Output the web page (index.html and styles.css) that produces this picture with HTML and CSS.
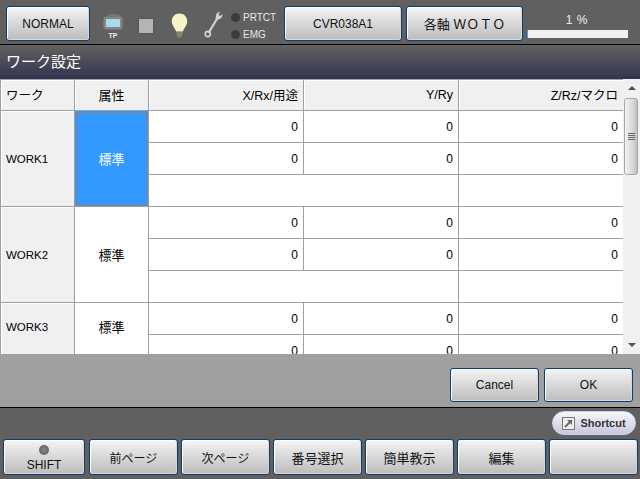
FILE: index.html
```html
<!DOCTYPE html>
<html lang="ja">
<head>
<meta charset="utf-8">
<title>ワーク設定</title>
<link rel="stylesheet" href="styles.css">
</head>
<body>
<div class="screen">
  <header class="topbar">
    <button class="btn mode">NORMAL</button>
    <div class="tp">
      <svg width="20" height="16" viewBox="0 0 20 16"><path d="M6 3V1h8v2" fill="none" stroke="#7c7c7c" stroke-width="1.400"/><rect x="0.500" y="2.500" width="19" height="13" rx="3" fill="#858585"/><rect x="3" y="5" width="14" height="8" rx="1" fill="#a5dcee"/><circle cx="16.500" cy="2" r="1.200" fill="#d85050"/></svg>
      <span>TP</span>
    </div>
    <div class="stop"></div>
    <svg class="bulb" width="17" height="25" viewBox="0 0 17 25"><path d="M8.500 0.500C3.800 0.500 0.800 4 0.800 8.500c0 4.200 3.400 6.500 4.200 10h7c.8-3.500 4.200-5.800 4.200-10C16.200 4 13.200 0.500 8.500 0.500z" fill="#f6f3c4"/><path d="M5.500 19h6v2.500L10 24.500H7L5.500 21.500z" fill="#8d8560"/></svg>
    <svg class="wrench" width="19" height="27" viewBox="0 0 19 27"><path d="M13.500 7 4.500 22" stroke="#d2d2d2" stroke-width="2.200" fill="none"/><path d="M11.500 7.500 12.500 2.500 16 0.500 14.500 3.500 16 5l2.500-1.800c.3 2.800-1.500 4.800-5 5.600z" fill="#d2d2d2"/><circle cx="3.800" cy="23" r="2.600" fill="none" stroke="#d2d2d2" stroke-width="1.600"/></svg>
    <div class="lamps">
      <div class="lamp"><i></i><span>PRTCT</span></div>
      <div class="lamp"><i></i><span>EMG</span></div>
    </div>
    <button class="btn wide">CVR038A1</button>
    <button class="btn wide spaced">各軸 ＷＯＴＯ</button>
    <div class="progress">
      <span>1 %</span>
      <div class="track"><div class="fill" style="width:1%"></div></div>
    </div>
  </header>

  <h1 class="title">ワーク設定</h1>

  <section class="grid-wrap">
    <div class="viewport">
      <table class="grid">
        <colgroup><col class="c1"><col class="c2"><col class="c3"><col class="c3"><col class="c4"></colgroup>
        <thead>
          <tr><th class="left">ワーク</th><th class="center">属性</th><th>X/Rx/用途</th><th>Y/Ry</th><th>Z/Rz/マクロ</th></tr>
        </thead>
        <tbody>
          <tr><th class="left" rowspan="3">WORK1</th><td class="center sel" rowspan="3">標準</td><td>0</td><td>0</td><td>0</td></tr>
          <tr><td>0</td><td>0</td><td>0</td></tr>
          <tr><td colspan="2"></td><td></td></tr>
          <tr><th class="left" rowspan="3">WORK2</th><td class="center" rowspan="3">標準</td><td>0</td><td>0</td><td>0</td></tr>
          <tr><td>0</td><td>0</td><td>0</td></tr>
          <tr><td colspan="2"></td><td></td></tr>
          <tr><th class="left clipped" rowspan="2">WORK3</th><td class="center clipped" rowspan="2">標準</td><td>0</td><td>0</td><td>0</td></tr>
          <tr><td>0</td><td>0</td><td>0</td></tr>
        </tbody>
      </table>
    </div>
    <div class="scrollbar">
      <div class="arrow up"></div>
      <div class="thumb"><i></i><i></i><i></i><i></i></div>
      <div class="rest"></div>
      <div class="arrow down"></div>
    </div>
  </section>

  <section class="actions">
    <button class="btn act">Cancel</button>
    <button class="btn act">OK</button>
  </section>

  <footer class="bottom">
    <div class="shortcut-row">
      <button class="shortcut">
        <svg width="13" height="13" viewBox="0 0 13 13"><rect x=".5" y=".5" width="12" height="12" fill="#eee" stroke="#777"/><path d="M3 10 9 4" fill="none" stroke="#666" stroke-width="1.800"/><path d="M5 3h5v5z" fill="#666"/></svg>
        Shortcut
      </button>
    </div>
    <nav class="fkeys">
      <button class="btn key first"><i class="led"></i><span>SHIFT</span></button>
      <button class="btn key">前ページ</button>
      <button class="btn key">次ページ</button>
      <button class="btn key cjk">番号選択</button>
      <button class="btn key cjk">簡単教示</button>
      <button class="btn key cjk">編集</button>
      <button class="btn key"></button>
    </nav>
  </footer>
</div>
</body>
</html>
```

FILE: styles.css
```css
* { box-sizing: border-box; }
html, body { margin: 0; padding: 0; }
body { width: 640px; height: 479px; overflow: hidden; background: #606060; }
body, button, table {
  font-family: "Liberation Sans", "Noto Sans CJK JP", sans-serif;
  font-size: 12px;
  color: #000;
}
.screen { width: 640px; height: 479px; display: flex; flex-direction: column; }

.btn {
  margin: 0;
  padding: 0;
  border: 1px solid #0b3f74;
  border-radius: 3px;
  background: linear-gradient(#f6f6f6, #e6e6e6 25%, #bcbcbc);
  box-shadow: inset 1px 1px 0 #fff, inset -1px -1px 0 #d8d8d8;
  color: #111;
}

.topbar {
  height: 45px;
  flex: none;
  display: flex;
  align-items: flex-start;
  padding: 6px 0 0 6px;
  background: #606060;
  border-bottom: 1px solid #000;
}
.mode { width: 84px; height: 35px; }
.tp {
  width: 20px;
  margin: 8px 0 0 13px;
  display: flex;
  flex-direction: column;
  align-items: center;
  color: #eee;
  font-size: 7px;
  font-weight: bold;
  line-height: 8px;
}
.tp svg { display: block; margin-bottom: 2px; }
.stop {
  width: 14px;
  height: 14px;
  margin: 13px 0 0 16px;
  background: #b4b4b4;
  box-shadow: 0 0 2px #444;
}
.bulb { margin: 7px 0 0 18px; flex: none; }
.wrench { margin: 5px 0 0 16px; flex: none; }
.lamps { width: 53px; margin-left: 8px; padding-top: 4px; display: flex; flex-direction: column; gap: 3px; }
.lamp { height: 14px; display: flex; align-items: center; gap: 3px; color: #e8e8e8; font-size: 10px; }
.lamp i { width: 9px; height: 9px; border-radius: 50%; background: #3c3c3c; flex: none; }
.wide { width: 118px; height: 35px; margin-right: 4px; }
.wide.spaced { width: 117px; margin-right: 0; font-size: 13px; }
.progress { width: 102px; margin-left: 4px; padding-top: 6px; display: flex; flex-direction: column; align-items: center; }
.progress span { color: #f0f0f0; font-size: 12px; line-height: 16px; word-spacing: 1px; padding-right: 3px; }
.track { width: 101px; height: 8px; margin: 2px auto 0 0; background: #f0f0f0; }
.fill { height: 8px; min-width: 1px; background: #3399ff; }

.title {
  height: 34px;
  flex: none;
  margin: 0;
  padding: 0 0 4px 6px;
  display: flex;
  align-items: center;
  font-size: 15px;
  font-weight: normal;
  color: #fff;
  background: linear-gradient(#626262, #33334f);
}

.grid-wrap {
  height: 276px;
  flex: none;
  display: flex;
  background: #f0f0f0;
  border-bottom: 1px solid #a0a0a0;
}
.viewport { width: 623px; height: 275px; overflow: hidden; flex: none; }
.grid { width: 623px; border-collapse: collapse; table-layout: fixed; background: #fff; }
.c1, .c2 { width: 74px; }
.c3 { width: 155px; }
.c4 { width: 165px; }
.grid tr { height: 32px; }
.grid thead tr { height: 31px; }
.grid th, .grid td {
  padding: 0 5px;
  border: 1px solid #a0a0a0;
  font-weight: normal;
  text-align: right;
  overflow: hidden;
  white-space: nowrap;
}
.grid thead th, .grid tbody th { background: #f0f0f0; box-shadow: inset 1px 1px 0 #fff; }
.grid thead th { font-size: 12.500px; padding-bottom: 1px; }
.grid .left { text-align: left; }
.grid .center { text-align: center; font-size: 13px; }
.grid tbody th { font-size: 11.500px; }
.grid .sel { background: #3399ff; color: #fff; outline: 1px dotted #d2691e; outline-offset: -2px; }
.grid .clipped { padding-bottom: 16px; }

.scrollbar { width: 17px; height: 275px; flex: none; display: flex; flex-direction: column; background: #f0f0f0; }
.arrow { height: 17px; flex: none; position: relative; }
.arrow::after {
  content: "";
  position: absolute;
  left: 5px;
  top: 7px;
  border-left: 4px solid transparent;
  border-right: 4px solid transparent;
}
.up::after { border-bottom: 4px solid #505050; }
.down::after { border-top: 4px solid #505050; top: 6px; }
.thumb {
  height: 77px;
  flex: none;
  margin: 2px 2px 0 1px;
  display: flex;
  flex-direction: column;
  justify-content: center;
  align-items: center;
  gap: 1px;
  border: 1px solid #a8a8a8;
  border-radius: 3px;
  background: linear-gradient(90deg, #f2f2f2, #d4d4d4 70%, #bdbdbd);
}
.thumb i { width: 7px; height: 1px; background: #666; }
.rest { flex: 1; }

.actions {
  height: 53px;
  flex: none;
  display: flex;
  justify-content: flex-end;
  gap: 5px;
  padding: 13px 7px 0 0;
  background: #a0a0a0;
  border-bottom: 1px solid #000;
}
.act { width: 89px; height: 34px; }

.bottom { flex: 1; display: flex; flex-direction: column; background: #606060; }
.shortcut-row { height: 31px; flex: none; display: flex; justify-content: flex-end; padding: 3px 4px 0 0; }
.shortcut {
  width: 84px;
  height: 24px;
  margin: 0;
  padding: 0;
  display: flex;
  align-items: center;
  justify-content: center;
  gap: 5px;
  border: 1px solid #c8d4ec;
  border-radius: 12px;
  background: linear-gradient(#f6f6fb, #c8c8de);
  color: #333;
  font-weight: bold;
  font-size: 11px;
}
.fkeys { display: flex; gap: 3px; padding-left: 3px; }
.key { width: 89px; height: 36px; flex: none; }
.key.cjk { font-size: 13px; }
.key.first { width: 82px; margin-right: 1px; display: flex; flex-direction: column; align-items: center; }
.led { width: 10px; height: 10px; margin-top: 5px; border-radius: 50%; background: radial-gradient(#8a8a8a, #555); }
.key.first span { line-height: 14px; margin-top: 3px; }
```
